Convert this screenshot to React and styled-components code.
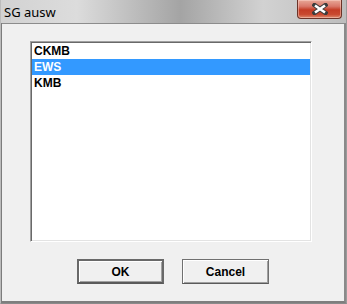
import styled, { createGlobalStyle } from 'styled-components';

const Global = createGlobalStyle`
  html, body {
    margin: 0;
    padding: 0;
    overflow: hidden;
    background: #ffffff;
  }
`;

const Window = styled.div`
  width: 347px;
  height: 304px;
  box-sizing: border-box;
  display: flex;
  flex-direction: column;
  background: linear-gradient(
    to right,
    #d2d2d2 0%,
    #dcdcdc 22%,
    #a4a4a4 52%,
    #d2d2d2 76%,
    #bdbdbd 100%
  );
  border-left: 1px solid #bcbcbc;
  border-right: 1px solid #9a9a9a;
  border-bottom: 1px solid #8a8a8a;
`;

const TitleBar = styled.div`
  height: 23px;
  flex: none;
  display: flex;
  align-items: flex-start;
  justify-content: space-between;
  padding: 0 3px 0 3px;
  box-sizing: border-box;
`;

const Title = styled.span`
  font-family: 'Noto Sans', 'Open Sans', sans-serif;
  font-size: 13px;
  line-height: 24px;
  color: #000;
`;

const CloseButton = styled.div`
  width: 45px;
  height: 19px;
  box-sizing: border-box;
  margin-right: 1px;
  border: 1px solid #6b3328;
  border-top: none;
  border-radius: 0 0 4px 4px;
  background: linear-gradient(
    to bottom,
    #e8a898 0%,
    #d9786a 35%,
    #c43c25 55%,
    #c9492f 80%,
    #dc8a6e 100%
  );
  box-shadow: inset 0 0 0 1px rgba(255, 220, 210, 0.45);
  display: flex;
  align-items: center;
  justify-content: center;
`;

const Body = styled.div`
  flex: 1;
  display: flex;
  border-left: 1px solid #7c7c7c;
  border-right: 2px solid #8a8a8a;
  border-bottom: 2px solid #7e7e7e;
`;

const Client = styled.div`
  flex: 1;
  background: #f0f0f0;
  border-top: 1px solid #8c8c8c;
  display: flex;
  flex-direction: column;
  align-items: center;
  padding-top: 17px;
`;

const ListBox = styled.div`
  width: 282px;
  height: 201px;
  box-sizing: border-box;
  margin-left: -4px;
  background: #fff;
  border: 1px solid;
  border-color: #a0a0a0 #ffffff #ffffff #a0a0a0;
  box-shadow: inset 1px 1px 0 #696969, inset -1px -1px 0 #e3e3e3;
  padding: 1px;
  display: flex;
  flex-direction: column;
`;

const Item = styled.div`
  height: 16px;
  padding: 1px 0 0 2px;
  box-sizing: border-box;
  font-family: 'Liberation Sans', Arial, sans-serif;
  font-weight: bold;
  font-size: 12px;
  line-height: 15px;
  color: ${(p) => (p.$selected ? '#ffffff' : '#000000')};
  background: ${(p) => (p.$selected ? '#3399ff' : 'transparent')};
`;

const ButtonRow = styled.div`
  display: flex;
  gap: 18px;
  margin-top: 17px;
`;

const Button = styled.div`
  width: 87px;
  height: 25px;
  box-sizing: border-box;
  display: flex;
  align-items: center;
  justify-content: center;
  background: #f0f0f0;
  border: ${(p) => (p.$default ? '2px solid #696969' : '1px solid #707070')};
  border-bottom-color: #5a5a5a;
  box-shadow: inset 1px 1px 0 #ffffff, inset -1px -1px 0 #a0a0a0;
  font-family: 'Liberation Sans', Arial, sans-serif;
  font-weight: bold;
  font-size: 12px;
  color: #000;
`;

const items = ['CKMB', 'EWS', 'KMB'];

export default function App() {
  return (
    <>
      <Global />
      <Window>
        <TitleBar>
          <Title>SG ausw</Title>
          <CloseButton>
            <svg width="16" height="12" viewBox="0 0 16 12">
              <path
                d="M2.5 2 L13.5 10 M13.5 2 L2.5 10"
                stroke="#3c3c3c"
                strokeWidth="4.4"
                strokeLinecap="square"
              />
              <path
                d="M3 2.5 L13 9.5 M13 2.5 L3 9.5"
                stroke="#ffffff"
                strokeWidth="2.6"
              />
            </svg>
          </CloseButton>
        </TitleBar>
        <Body>
          <Client>
            <ListBox>
              {items.map((it) => (
                <Item key={it} $selected={it === 'EWS'}>
                  {it}
                </Item>
              ))}
            </ListBox>
            <ButtonRow>
              <Button $default>OK</Button>
              <Button>Cancel</Button>
            </ButtonRow>
          </Client>
        </Body>
      </Window>
    </>
  );
}
